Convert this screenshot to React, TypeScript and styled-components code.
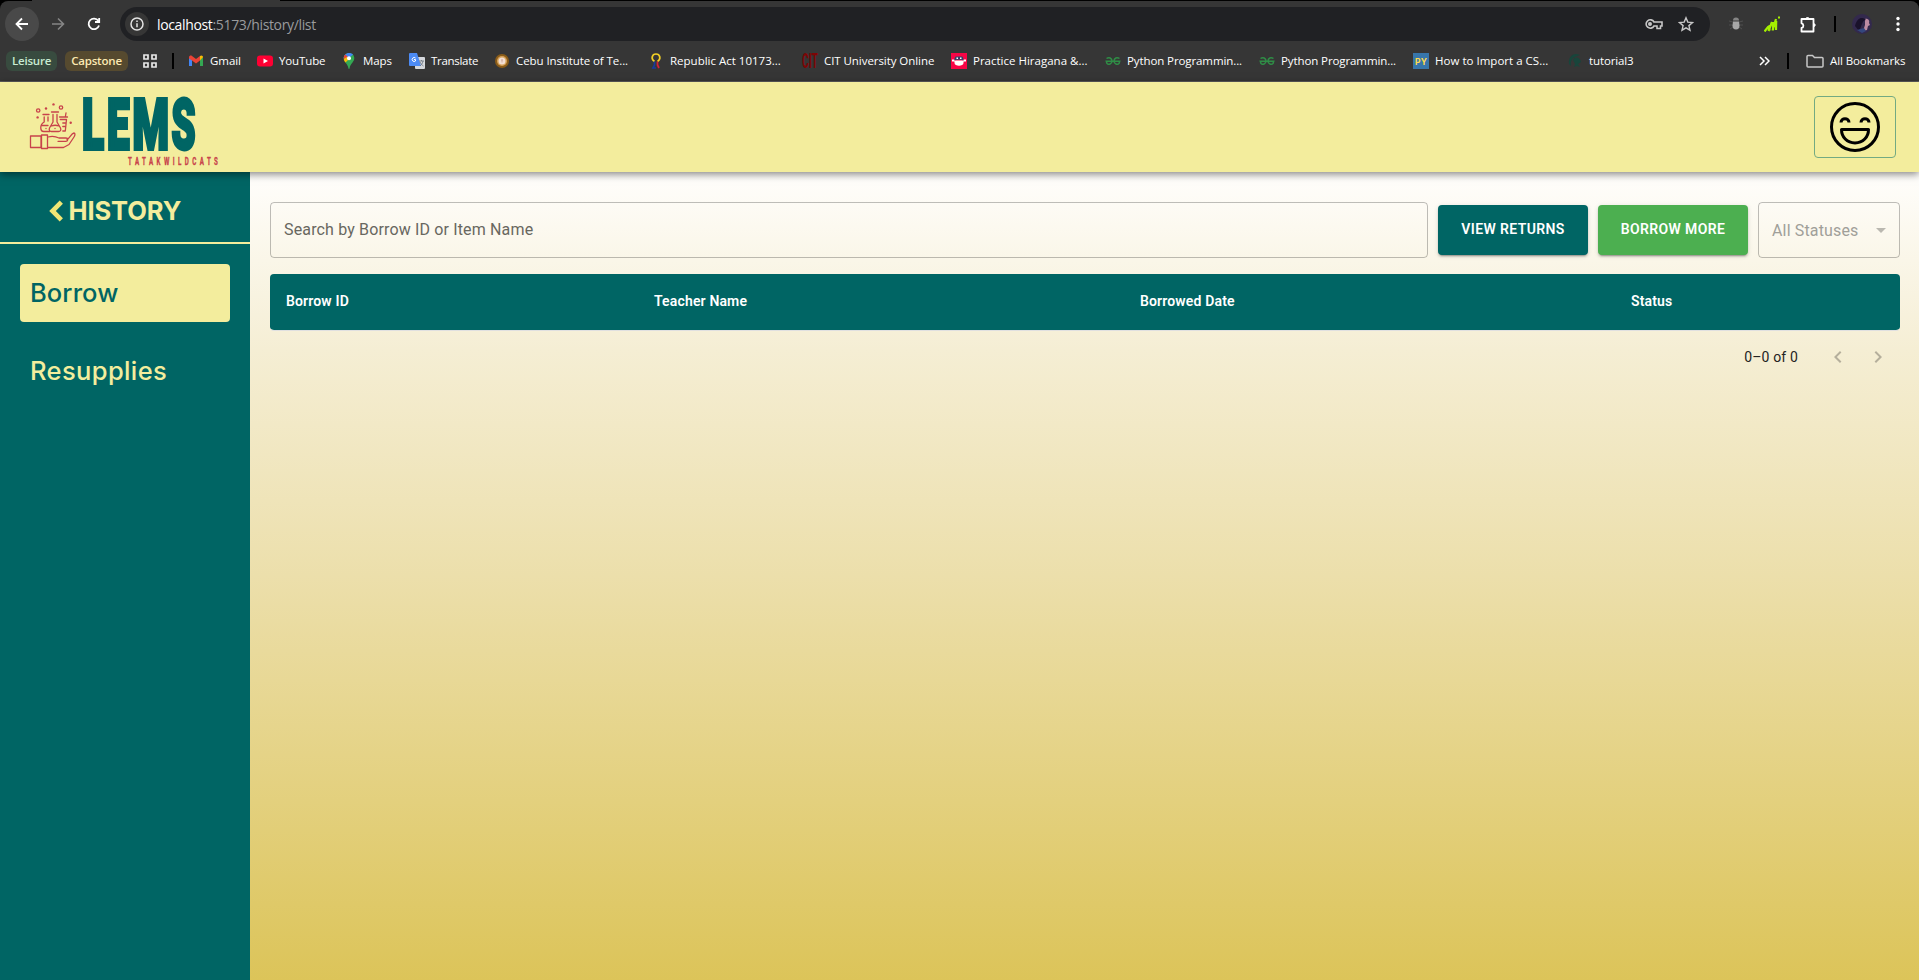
import React from "react";
import styled, { createGlobalStyle } from "styled-components";

const TEAL = "#006564";
const CREAM = "#f3ed9d";

const GlobalStyle = createGlobalStyle`
  * { box-sizing: border-box; }
  html, body { margin: 0; padding: 0; overflow: hidden; }
  body { font-family: Roboto, "Liberation Sans", sans-serif; }
`;

const Page = styled.div`
  display: flex;
  flex-direction: column;
  width: 100%;
  height: 100vh;
`;

/* ---------- Browser chrome ---------- */

const Chrome = styled.div`
  flex: none;
  height: 82px;
  background: linear-gradient(to right, #000 32px, #363636 32px, #363636 280px, #000 280px);
  padding-top: 1px;
  font-family: "Open Sans", "Noto Sans", sans-serif;
`;

const ChromeBody = styled.div`
  height: 81px;
  background: #363636;
  border-radius: 8px 8px 0 0;
  border-bottom: 1px solid #5e5e5e;
`;

const Toolbar = styled.div`
  display: flex;
  align-items: center;
  height: 46px;
  padding: 0 19px 0 5px;
`;

const NavButton = styled.div<{ $active?: boolean; $gap?: number }>`
  display: flex;
  align-items: center;
  justify-content: center;
  width: 34px;
  height: 34px;
  margin-right: ${(p) => p.$gap ?? 2}px;
  border-radius: 50%;
  background: ${(p) => (p.$active ? "#494949" : "transparent")};
`;

const AddressBar = styled.div`
  display: flex;
  flex: none;
  align-items: center;
  width: 1590px;
  height: 34px;
  padding: 0 16px 0 5px;
  border-radius: 17px;
  background: #202124;
  color: #9a9b9d;
  font-size: 14px;
  letter-spacing: -0.35px;
`;

const InfoBadge = styled.div`
  display: flex;
  align-items: center;
  justify-content: center;
  width: 24px;
  height: 24px;
  margin-right: 8px;
  border-radius: 50%;
  background: #363636;
`;

const Host = styled.span`
  color: #fff;
`;

const AddressActions = styled.div`
  display: flex;
  align-items: center;
  gap: 15px;
  margin-left: auto;
`;

const Extensions = styled.div`
  display: flex;
  flex: 1;
  align-items: center;
  justify-content: flex-end;
  gap: 20px;
`;

const ProfileGroup = styled.div`
  display: flex;
  align-items: center;
  gap: 16px;
  margin-left: -3px;
`;

const MenuDots = styled.div`
  display: flex;
  margin-left: 4px;
`;

const Divider = styled.div`
  width: 2px;
  height: 16px;
  background: #000;
`;

const Bookmarks = styled.div`
  display: flex;
  align-items: center;
  height: 28px;
  padding: 0 12px 0 6px;
  color: #fff;
  font-size: 11.5px;
  white-space: nowrap;
`;

const Group = styled.div<{ $bg: string; $fg: string; $w: number }>`
  width: ${(p) => p.$w}px;
  height: 20px;
  margin-right: 8px;
  border-radius: 6px;
  background: ${(p) => p.$bg};
  color: ${(p) => p.$fg};
  font-weight: 600;
  font-size: 11.5px;
  line-height: 19px;
  letter-spacing: -0.2px;
  text-align: center;
`;

const Launcher = styled.div`
  display: flex;
  padding: 0 15px 0 7px;
`;

const Bookmark = styled.div<{ $w: number; $ls?: number }>`
  display: flex;
  align-items: center;
  gap: 6px;
  width: ${(p) => p.$w}px;
  letter-spacing: ${(p) => p.$ls ?? -0.06}px;
  line-height: 18px;
  svg { flex: none; }
`;

const BookmarkList = styled.div`
  display: flex;
  margin-left: 14px;
`;

const Overflow = styled.div`
  display: flex;
  align-items: center;
  margin-left: auto;
  gap: 17px;
`;

/* ---------- App shell ---------- */

const AppHeader = styled.header`
  position: relative;
  z-index: 2;
  display: flex;
  flex: none;
  align-items: center;
  justify-content: space-between;
  height: 90px;
  padding: 0 23px 0 22px;
  background: ${CREAM};
  box-shadow: 0 2px 8px rgba(0, 0, 0, 0.5);
`;

const ProfileButton = styled.div`
  display: flex;
  align-items: center;
  justify-content: center;
  width: 82px;
  height: 62px;
  border: 1px solid #73aa82;
  border-radius: 4px;
`;

const Body = styled.div`
  display: flex;
  flex: 1;
  min-height: 0;
`;

const Sidebar = styled.aside`
  width: 250px;
  background: ${TEAL};
  color: ${CREAM};
  font-family: Inter, "Open Sans", sans-serif;
`;

const SidebarTitle = styled.div`
  display: flex;
  align-items: center;
  height: 72px;
  padding: 7px 0 0 49px;
  border-bottom: 2px solid ${CREAM};
  font-size: 25.5px;
  font-weight: 700;
  letter-spacing: -0.1px;
  svg { margin-right: 5.5px; }
`;

const Menu = styled.nav`
  display: flex;
  flex-direction: column;
  gap: 20px;
  padding: 20px;
`;

const MenuItem = styled.div<{ $selected?: boolean; $ls?: number }>`
  display: flex;
  align-items: center;
  height: 58px;
  padding: 0 0 1px 10px;
  border-radius: 4px;
  background: ${(p) => (p.$selected ? CREAM : "transparent")};
  color: ${(p) => (p.$selected ? TEAL : CREAM)};
  font-size: 25.5px;
  font-weight: 500;
  letter-spacing: ${(p) => p.$ls ?? 0}px;
`;

const Main = styled.main`
  flex: 1;
  padding: 30px 19px 0 20px;
  background: linear-gradient(to bottom, #fffefc 0%, #f5eed4 22%, #ecdfab 50%, #dcc459 100%);
`;

const Controls = styled.div`
  display: flex;
  align-items: center;
  gap: 10px;
`;

const SearchField = styled.div`
  display: flex;
  flex: 1;
  align-items: center;
  height: 56px;
  padding: 0 13px 2px;
  border: 1px solid rgba(0, 0, 0, 0.25);
  border-radius: 4px;
  color: #68675f;
  font-size: 16px;
  letter-spacing: 0.15px;
`;

const ActionButton = styled.div<{ $color: string }>`
  display: flex;
  align-items: center;
  justify-content: center;
  width: 150px;
  height: 50px;
  padding-bottom: 2px;
  border-radius: 4px;
  background: ${(p) => p.$color};
  color: #fff;
  font-size: 14px;
  font-weight: 600;
  letter-spacing: 0.38px;
  box-shadow: 0 3px 1px -2px rgba(0, 0, 0, 0.2), 0 2px 2px rgba(0, 0, 0, 0.14), 0 1px 5px rgba(0, 0, 0, 0.12);
`;

const StatusSelect = styled.div`
  display: flex;
  align-items: center;
  justify-content: space-between;
  width: 142px;
  height: 56px;
  padding: 0 6px 0 13px;
  border: 1px solid rgba(0, 0, 0, 0.25);
  border-radius: 4px;
  color: #a09f99;
  font-size: 16px;
  letter-spacing: 0.15px;
`;

const TableHead = styled.div`
  display: grid;
  grid-template-columns: 368px 486px 491px 1fr;
  align-items: center;
  height: 57px;
  margin-top: 16px;
  padding: 0 0 3px 16px;
  border-bottom: 1px solid #e0e0e0;
  border-radius: 4px;
  background: ${TEAL};
  background-clip: padding-box;
  color: #fff;
  font-size: 14px;
  font-weight: 600;
  letter-spacing: 0.15px;
`;

const Pagination = styled.div`
  display: flex;
  align-items: center;
  justify-content: flex-end;
  height: 51px;
  padding-right: 10px;
  color: #24231f;
  font-size: 14px;
  letter-spacing: 0.15px;
`;

const PageArrows = styled.div`
  display: flex;
  gap: 16px;
  margin-left: 28px;
`;

/* ---------- Drawings ---------- */

const Logo = () => (
  <svg width="205" height="80" viewBox="0 0 205 80" fill="none" overflow="visible">
    <g stroke="#c8434b" strokeWidth="1.3" strokeLinejoin="round" strokeLinecap="round" transform="translate(0 3)">
      <path d="M8.500 46h10.500v11.500H8.500zM19.500 45h6v13.500h-6z" />
      <path d="M26 47c5-1.500 8-.5 11 1h7c2.400 0 2.400 3.200 0 3.300h-8M45 49.500c3-1 4-6 7-6.500 1.500 .2 1 2.500 0 4l-5 7.500-5.500 3H26" />
      <path d="M21 24.500h6M22.200 27v5c-5 3-4 9.500-.5 9.500h6M26 27v4M20 35.500h6" />
      <path d="M29.500 22h7M31 24.500v7.500l-3.500 6c-.8 2 .2 3.500 2 3.500h7c2 0 2.800-1.500 2-3.500L35 32v-7.500M29.500 36q3.500-1.500 7.500 0" />
      <path d="M37.500 27h8M38.300 29.500h6.200l-1.200 11.500h-2.500M43.300 27l.7-4M40.800 33h2.500M40.800 36.500h2" />
      <circle cx="16.200" cy="20.500" r="1.700" />
      <circle cx="39" cy="17.500" r="1.700" />
    </g>
    <g fill="#c8434b" transform="translate(0 2)">
      <circle cx="24" cy="19.500" r="1.200" />
      <circle cx="31.500" cy="15.400" r="1.200" />
      <circle cx="15.600" cy="28.400" r="1.200" />
      <circle cx="48.700" cy="33.700" r="1.200" />
      <circle cx="24" cy="39.500" r=".7" />
      <circle cx="33" cy="39.500" r=".7" />
    </g>
    <g fill={TEAL} stroke={TEAL} strokeWidth="3.800" fontFamily="Roboto, sans-serif" fontWeight="900" fontSize="71">
      <text x="60" y="62" textLength="22" lengthAdjust="spacingAndGlyphs">L</text>
      <text x="85" y="62" textLength="22.500" lengthAdjust="spacingAndGlyphs">E</text>
      <text x="110.500" y="62" textLength="36.500" lengthAdjust="spacingAndGlyphs">M</text>
      <text x="149.500" y="62" textLength="24" lengthAdjust="spacingAndGlyphs">S</text>
    </g>
    <g transform="translate(106 78) scale(.62 1)">
      <text fill="#c8434b" stroke="#c8434b" strokeWidth=".3" fontFamily="Roboto, sans-serif" fontWeight="700" fontSize="10" textLength="145">
        TATAKWILDCATS
      </text>
    </g>
  </svg>
);

const Smiley = () => (
  <svg width="52" height="52" viewBox="0 0 52 52" fill="none" stroke="#000" strokeWidth="3">
    <circle cx="26" cy="26" r="23.5" />
    <path d="M12.5 28.5h27c0 7.5-5.5 13.5-13.5 13.5s-13.500-6-13.500-13.500z" strokeLinejoin="round" />
    <path d="M12 21.500c0-5 8-5 8 0M32 21.500c0-5 8-5 8 0" />
  </svg>
);

const GmailIcon = () => (
  <svg width="16" height="16" viewBox="0 0 16 16">
    <path d="M1 4v9h3V7z" fill="#4285f4" />
    <path d="M15 4v9h-3V7z" fill="#34a853" />
    <path d="M1 4.500C1 2.500 3 2 4 3l4 3 4-3v4.500L8 10.500 4 7.500 1 5.500z" fill="#ea4335" />
    <path d="M12 3c1.500-1.200 3-.3 3 1.300L12 7.500z" fill="#fbbc04" />
  </svg>
);
const YouTubeIcon = () => (
  <svg width="16" height="16" viewBox="0 0 16 16">
    <rect y="2.500" width="16" height="11" rx="3" fill="#ff0033" />
    <path d="M6.500 5.500v5L11 8z" fill="#fff" />
  </svg>
);
const MapsIcon = () => (
  <svg width="16" height="16" viewBox="0 0 16 16">
    <path d="M8 0C4.800 0 2.700 2.300 2.700 5.200c0 4 4 5 4.700 10 .1 1 1.100 1 1.200 0 .7-5 4.700-6 4.700-10C13.300 2.300 11.200 0 8 0z" fill="#34a853" />
    <path d="M8 0C5 0 2.700 2.300 2.700 5.200L8 5l4-3.500C11 .5 9.500 0 8 0z" fill="#4285f4" />
    <path d="M4.300 1.500C3 2.800 2.500 4 2.800 6L7 4z" fill="#ea4335" />
    <path d="M2.800 6c.2 1.500.9 2.500 1.700 3.500L8 6 6 4z" fill="#fbbc04" />
    <circle cx="8" cy="5.200" r="2" fill="#fff" />
  </svg>
);
const TranslateIcon = () => (
  <svg width="16" height="16" viewBox="0 0 16 16">
    <rect x="6" y="4" width="10" height="12" rx="1" fill="#d5d8dc" />
    <path d="M1 0h7l4 13H1a1 1 0 0 1-1-1V1a1 1 0 0 1 1-1z" fill="#4c8bf5" />
    <path d="M6.500 5A2 2 0 1 0 6.500 8V6.500H5" stroke="#fff" fill="none" />
    <path d="M10 8h5M12.500 7v1m1.500 0c-.5 3-2 4-3 5m0-4c1 2 2 3 3.500 4" stroke="#68717b" fill="none" strokeWidth=".8" />
  </svg>
);
const SealIcon = () => (
  <svg width="16" height="16" viewBox="0 0 16 16">
    <circle cx="8" cy="8" r="7" fill="#8b5c18" />
    <circle cx="8" cy="8" r="5" fill="#d6a35c" />
    <circle cx="8" cy="8" r="3.500" fill="#f2dfd4" />
    <path d="M7 7h2M8 6.500v3" stroke="#d3aea0" />
  </svg>
);
const RibbonIcon = () => (
  <svg width="16" height="16" viewBox="0 0 16 16" fill="none" strokeWidth="1.700">
    <path d="M6.500 8.500C2.500 6 4 1 8 1s5.500 5 1.500 7.500" stroke="#f2cf25" />
    <path d="M6.500 8.500V12L5 15h3" stroke="#173a9e" />
    <path d="M9.500 8.500V12l1.500 3" stroke="#d31f35" />
  </svg>
);
const CitIcon = () => (
  <svg width="16" height="16" viewBox="0 0 16 16" overflow="visible">
    <text x="0" y="15" fontFamily="Roboto, sans-serif" fontSize="20" fontWeight="700" textLength="16" lengthAdjust="spacingAndGlyphs" letterSpacing="0" fill="#7d0505">CIT</text>
  </svg>
);
const MascotIcon = () => (
  <svg width="16" height="16" viewBox="0 0 16 16">
    <path d="M0 0h16v16H0z" fill="#f80546" />
    <path d="M3.500 7.500h9v2.500c0 3.500-9 3.500-9 0zM1 6.500h2.500v2H1zM12.500 6.500H15v2h-2.500z" fill="#fff" />
    <path d="M3.500 7.500c0-4.500 1.500-4 2.500-4h4c1 0 2.500-.5 2.500 4l-2-.7h-5z" fill="#32436c" />
    <path d="M5.500 5.300h1.500M9 5.300h1.500" stroke="#fff" strokeWidth="1.500" />
  </svg>
);
const GfgIcon = () => (
  <svg width="16" height="16" viewBox="0 0 16 16" fill="none" stroke="#2f8d46" strokeWidth="1.500">
    <path d="M1.500 5.500C4 3.700 7 5 7 8s-3.500 4-5 2.500L1.300 8.300h13.400L14 10.500C12.500 12 9 11 9 8s3-4.300 5.500-2.500" />
  </svg>
);
const PyIcon = () => (
  <svg width="16" height="16" viewBox="0 0 16 16">
    <path d="M0 0h16v16H0z" fill="#3776ab" />
    <text x="8" y="11.500" fontFamily="Inter, sans-serif" fontSize="8.500" fontWeight="700" textAnchor="middle" fill="#ffdb4d">PY</text>
  </svg>
);
const SpartanIcon = () => (
  <svg width="16" height="16" viewBox="0 0 16 16" fill="#18453b">
    <path d="M13 2C7-1 1 3 2 11l2 2c-1-6 2-9 9-11z" />
    <path d="M6 7c2-4 7-3 8 2l-3 2 2 3-3-1-3 1 1-3z" />
  </svg>
);

const BOOKMARKS = [
  { label: "Gmail", width: 69, Icon: GmailIcon },
  { label: "YouTube", width: 84, spacing: -0.12, Icon: YouTubeIcon },
  { label: "Maps", width: 68, Icon: MapsIcon },
  { label: "Translate", width: 85, spacing: -0.3, Icon: TranslateIcon },
  { label: "Cebu Institute of Te...", width: 154, spacing: -0.08, Icon: SealIcon },
  { label: "Republic Act 10173...", width: 154, spacing: 0, Icon: RibbonIcon },
  { label: "CIT University Online", width: 149, spacing: -0.06, Icon: CitIcon },
  { label: "Practice Hiragana &...", width: 154, spacing: 0, Icon: MascotIcon },
  { label: "Python Programmin...", width: 154, spacing: -0.1, Icon: GfgIcon },
  { label: "Python Programmin...", width: 154, spacing: -0.1, Icon: GfgIcon },
  { label: "How to Import a CS...", width: 154, spacing: 0.02, Icon: PyIcon },
  { label: "tutorial3", width: 70, spacing: -0.12, Icon: SpartanIcon },
];

const BrowserChrome = () => (
  <Chrome>
    <ChromeBody>
      <Toolbar>
        <NavButton $active>
          <svg width="14" height="14" viewBox="0 0 14 14" fill="none" stroke="#fff" strokeWidth="1.800"><path d="M13 7H1.500M7 1.500L1.500 7 7 12.500" /></svg>
        </NavButton>
        <NavButton>
          <svg width="14" height="14" viewBox="0 0 14 14" fill="none" stroke="#858585" strokeWidth="1.600"><path d="M1 7h11.500M7 1.500L12.500 7 7 12.500" /></svg>
        </NavButton>
        <NavButton $gap={9}>
          <svg width="14" height="14" viewBox="0 0 14 14" fill="none" stroke="#fff" strokeWidth="1.800"><path d="M12 8.500A5.300 5.300 0 1 1 11.300 3.800M12.200 1v4H8" /></svg>
        </NavButton>
        <AddressBar>
          <InfoBadge>
            <svg width="14" height="14" viewBox="0 0 14 14" fill="none" stroke="#e3e3e3" strokeWidth="1.500"><circle cx="7" cy="7" r="6" /><path d="M7 6.200v4M7 3.500v1.600" /></svg>
          </InfoBadge>
          <Host>localhost</Host>:5173/history/list
          <AddressActions>
            <svg width="18" height="12" viewBox="0 0 18 12" fill="none" stroke="#c7c7c7" strokeWidth="1.600"><path d="M9 4a4.200 4.200 0 1 0 0 4h3v2.500h3.500V8H17V4z" /><circle cx="5" cy="6" r="1.200" fill="#c7c7c7" /></svg>
            <svg width="16" height="16" viewBox="0 0 16 16" fill="none" stroke="#c7c7c7" strokeWidth="1.400"><path d="M8 1.800l1.800 4.300 4.700.4-3.600 3.100 1.100 4.600L8 11.800l-4 2.400 1.100-4.600L1.500 6.500l4.700-.4z" /></svg>
          </AddressActions>
        </AddressBar>
        <Extensions>
          <svg width="16" height="16" viewBox="0 0 16 16"><path d="M1 5l4 1M1 9h4M2 13l3-2M15 5l-4 1M15 9h-4M14 13l-3-2" stroke="#555" strokeWidth=".8" /><path d="M5 4.500a3 3 0 0 1 6 0z" fill="#858585" /><path d="M5 5.500h6l.5 4a3.500 4 0 0 1-7 0z" fill="#a7a7a7" /></svg>
          <svg width="16" height="16" viewBox="0 0 16 16" stroke="#a4ef00" strokeWidth="2.200" fill="none"><path d="M.5 15.500l4-5M4.500 15L8 6M8.500 14.500L12 3M12 14l.2-9M5.500 9v5.500M9 6v8M14 1.500h2" /></svg>
          <svg width="17" height="17" viewBox="0 0 17 17" fill="none" stroke="#fff" strokeWidth="1.800" strokeLinejoin="round"><path d="M1.500 3h12v12.500h-12V12c2.500-.5 2.500-4.200 0-4.700z" /><path d="M5.700 3c0-2 3.600-2 3.600 0zM13.500 7.500c2.200 0 2.200 3.200 0 3.200z" fill="#fff" strokeWidth="1" /></svg>
          <ProfileGroup>
            <Divider />
            <svg width="20" height="20" viewBox="0 0 20 20"><circle cx="10" cy="10" r="10" fill="#33294d" /><path d="M13 5c3-1 5 2 4 4l1 2-2 1-1 4-4 1 2-6z" fill="#bd8ba3" /><path d="M3 12c2-8 7-10 11-6-4 0-4 6-7 11z" fill="#1a122b" /><path d="M5 16l7-2 2 3-4 2z" fill="#34477e" /></svg>
          </ProfileGroup>
          <MenuDots>
            <svg width="4" height="16" viewBox="0 0 4 16" fill="#fff"><circle cx="2" cy="2.500" r="1.700" /><circle cx="2" cy="8" r="1.700" /><circle cx="2" cy="13.500" r="1.700" /></svg>
          </MenuDots>
        </Extensions>
      </Toolbar>
      <Bookmarks>
        <Group $w={51} $bg="#384b3f" $fg="#c8ecd2">Leisure</Group>
        <Group $w={63} $bg="#564a2f" $fg="#fce9b2">Capstone</Group>
        <Launcher>
          <svg width="14" height="14" viewBox="0 0 14 14" fill="none" stroke="#e8e8e8" strokeWidth="1.700"><path d="M1 1h4v4H1zM9 1h4v4H9zM1 9h4v4H1zM9 9h4v4H9z" /></svg>
        </Launcher>
        <Divider />
        <BookmarkList>
          {BOOKMARKS.map(({ label, width, spacing, Icon }, i) => (
            <Bookmark key={i} $w={width} $ls={spacing}><Icon />{label}</Bookmark>
          ))}
        </BookmarkList>
        <Overflow>
          <svg width="11" height="10" viewBox="0 0 11 10" fill="none" stroke="#fff" strokeWidth="1.500"><path d="M1 1l4 4-4 4M6 1l4 4-4 4" /></svg>
          <Divider />
          <Bookmark $w={101} $ls={-0.1}>
            <svg width="18" height="14" viewBox="0 0 18 14" fill="none" stroke="#c7c7c7" strokeWidth="1.500"><path d="M2 1.500h4.500l2 2H16q1 0 1 1V12q0 1-1 1H2q-1 0-1-1V2.500q0-1 1-1z" /></svg>
            All Bookmarks
          </Bookmark>
        </Overflow>
      </Bookmarks>
    </ChromeBody>
  </Chrome>
);

export default function App() {
  return (
    <Page>
      <GlobalStyle />
      <BrowserChrome />
      <AppHeader>
        <Logo />
        <ProfileButton><Smiley /></ProfileButton>
      </AppHeader>
      <Body>
        <Sidebar>
          <SidebarTitle>
            <svg width="14" height="22" viewBox="0 0 14 22" fill="none" stroke="#f0e675" strokeWidth="4.600"><path d="M12.300 2.200L3.500 11l8.800 8.800" /></svg>
            HISTORY
          </SidebarTitle>
          <Menu>
            <MenuItem $selected $ls={0.1}>Borrow</MenuItem>
            <MenuItem $ls={0.38}>Resupplies</MenuItem>
          </Menu>
        </Sidebar>
        <Main>
          <Controls>
            <SearchField>Search by Borrow ID or Item Name</SearchField>
            <ActionButton $color={TEAL}>VIEW RETURNS</ActionButton>
            <ActionButton $color="#4caf50">BORROW MORE</ActionButton>
            <StatusSelect>
              All Statuses
              <svg width="24" height="24" viewBox="0 0 24 24" fill="#bab8b0"><path d="M7 10l5 5 5-5z" /></svg>
            </StatusSelect>
          </Controls>
          <TableHead>
            <span>Borrow ID</span>
            <span>Teacher Name</span>
            <span>Borrowed Date</span>
            <span>Status</span>
          </TableHead>
          <Pagination>
            0–0 of 0
            <PageArrows>
              <svg width="24" height="24" viewBox="0 0 24 24" fill="#b5af9c"><path d="M15.410 7.410L14 6l-6 6 6 6 1.410-1.410L10.830 12z" /></svg>
              <svg width="24" height="24" viewBox="0 0 24 24" fill="#b5af9c"><path d="M8.590 16.590L13.170 12 8.590 7.410 10 6l6 6-6 6z" /></svg>
            </PageArrows>
          </Pagination>
        </Main>
      </Body>
    </Page>
  );
}
